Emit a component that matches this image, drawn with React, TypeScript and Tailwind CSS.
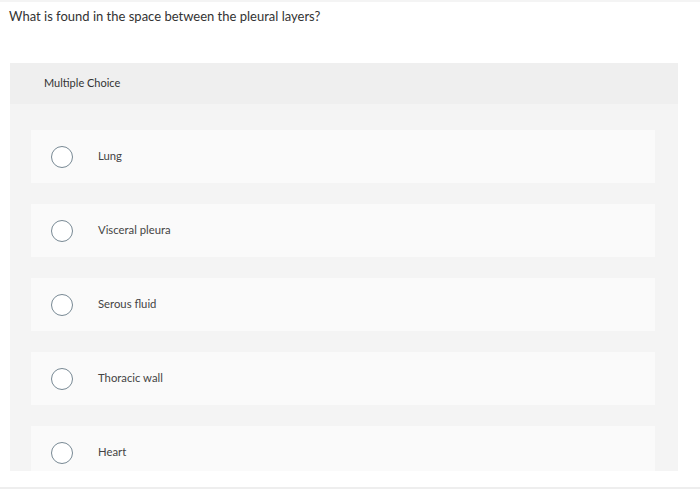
import React from "react";

const options = ["Lung", "Visceral pleura", "Serous fluid", "Thoracic wall", "Heart"];

export default function App() {
  return (
    <div
      className="w-[700px] h-[491px] bg-white overflow-hidden flex flex-col"
      style={{ fontFamily: "Lato, 'Open Sans', sans-serif" }}
    >
      <div className="h-[2px] shrink-0 bg-[#f4f4f4]" />
      <div className="pl-[9px] pt-[6px] h-[61px] shrink-0 text-[13px] leading-[16px] text-[#333]">
        What is found in the space between the pleural layers?
      </div>
      <div className="ml-[10px] w-[668px] h-[408px] shrink-0 bg-[#f4f4f4] flex flex-col overflow-hidden">
        <div className="h-[41px] shrink-0 bg-[#efefef] pl-[34px] flex items-center text-[11px] text-[#333]">
          Multiple Choice
        </div>
        <div className="flex flex-col shrink-0 gap-[21px] pt-[26px] pl-[21px] pr-[23px]">
          {options.map((o) => (
            <div key={o} className="h-[53px] shrink-0 bg-[#fafafa] flex items-center">
              <div className="ml-[20px] w-[22px] h-[22px] rounded-full border-[1.3px] border-[#788994] bg-white shrink-0" />
              <div className="ml-[25px] text-[11.3px] text-[#444]">{o}</div>
            </div>
          ))}
        </div>
      </div>
      <div className="mt-[16px] h-[2px] shrink-0 bg-[#eeeeee]" />
    </div>
  );
}
